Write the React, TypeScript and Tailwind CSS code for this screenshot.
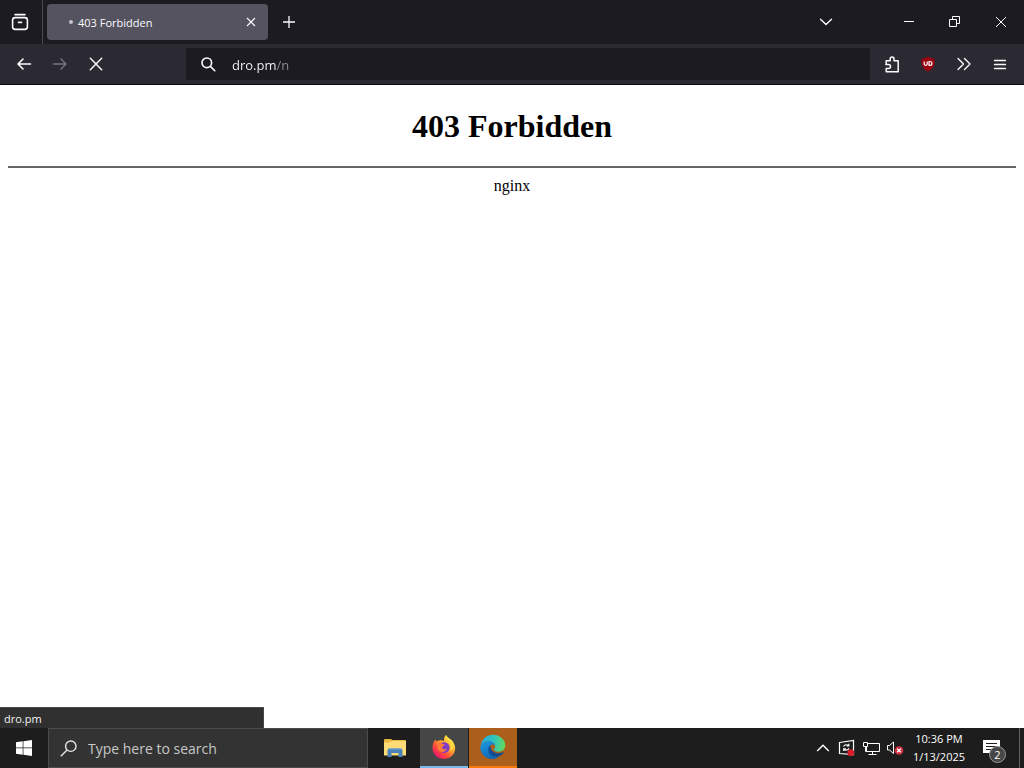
import type { ReactNode } from 'react';

const uiFont = "font-['Open_Sans','Noto_Sans',sans-serif]";

function IconButton({ label, className, children }: { label: string; className: string; children: ReactNode }) {
  return (
    <button type="button" aria-label={label} className={`flex shrink-0 items-center justify-center ${className}`}>
      {children}
    </button>
  );
}

function TabBar() {
  return (
    <header className="flex h-11 items-center bg-[#1c1b22] text-[#fbfbfe]">
      <IconButton label="Firefox View" className="h-11 w-10">
        <svg width="18" height="18" viewBox="0 0 18 18" fill="none" stroke="currentColor" strokeWidth="1.6" strokeLinecap="round">
          <path d="M4 1.6h10" />
          <rect x="1.6" y="4.6" width="14.8" height="11.8" rx="2.6" />
          <path d="M7.5 9.4h3" />
        </svg>
      </IconButton>
      <div className="ml-0.5 h-11 w-px bg-[#4a4954]" />
      <div className="ml-1 flex h-9 w-[221px] items-center rounded bg-[#54535f]">
        <span className="ml-[22px] size-1 rounded-full bg-[#c5c4cc]" />
        <span className="ml-[5px] flex-1 pt-0.5 text-[11px] leading-4">403 Forbidden</span>
        <IconButton label="Close tab" className="mr-[5px] size-6">
          <svg width="10" height="10" viewBox="0 0 10 10" stroke="currentColor" strokeWidth="1.1">
            <path d="M1 1l8 8M9 1l-8 8" />
          </svg>
        </IconButton>
      </div>
      <IconButton label="New tab" className="ml-[5px] size-8">
        <svg width="14" height="14" viewBox="0 0 14 14" stroke="currentColor" strokeWidth="1.3">
          <path d="M7 1v12M1 7h12" />
        </svg>
      </IconButton>
      <div className="flex-1" />
      <IconButton label="List all tabs" className="mr-[42px] size-9">
        <svg width="14" height="8" viewBox="0 0 14 8" fill="none" stroke="currentColor" strokeWidth="1.4" strokeLinecap="round" strokeLinejoin="round">
          <path d="M1.5 1.2L7 6.5l5.5-5.3" />
        </svg>
      </IconButton>
      <IconButton label="Minimize" className="h-11 w-[46px]">
        <svg width="10" height="10" viewBox="0 0 10 10" fill="currentColor">
          <rect y="4" width="10" height="1" />
        </svg>
      </IconButton>
      <IconButton label="Restore" className="h-11 w-[46px]">
        <svg width="12" height="12" viewBox="0 0 12 12" fill="none" stroke="currentColor">
          <path d="M.5 3.5h7v7h-7zM3.5 3V.5h7v7H8" />
        </svg>
      </IconButton>
      <IconButton label="Close" className="h-11 w-[46px]">
        <svg width="12" height="12" viewBox="0 0 12 12" stroke="currentColor">
          <path d="M1 1l10 10M11 1L1 11" />
        </svg>
      </IconButton>
    </header>
  );
}

function NavBar() {
  return (
    <nav className="flex h-[41px] items-center border-b border-[#08080c] bg-[#2b2a33] px-1.5 text-[#fbfbfe]">
      <IconButton label="Back" className="size-9">
        <svg width="16" height="14" viewBox="0 0 16 14" fill="none" stroke="currentColor" strokeWidth="1.6" strokeLinecap="round" strokeLinejoin="round">
          <path d="M14.5 7H2M7 2L2 7l5 5" />
        </svg>
      </IconButton>
      <IconButton label="Forward" className="size-9 text-[#77767e]">
        <svg width="16" height="14" viewBox="0 0 16 14" fill="none" stroke="currentColor" strokeWidth="1.4" strokeLinecap="round" strokeLinejoin="round">
          <path d="M1.5 7H14M9 2l5 5-5 5" />
        </svg>
      </IconButton>
      <IconButton label="Stop" className="size-9">
        <svg width="14" height="14" viewBox="0 0 14 14" stroke="currentColor" strokeWidth="1.4" strokeLinecap="round">
          <path d="M1.3 1.3l11.4 11.4M12.7 1.3L1.3 12.7" />
        </svg>
      </IconButton>
      <div className="ml-[72px] mr-1 flex h-8 min-w-0 flex-1 items-center bg-[#1c1b22]">
        <svg className="ml-[15px] shrink-0" width="15" height="15" viewBox="0 0 15 15" fill="none" stroke="currentColor" strokeWidth="1.6" strokeLinecap="round">
          <circle cx="5.8" cy="5.8" r="4.8" />
          <path d="M9.4 9.4l4.4 4.4" />
        </svg>
        <input
          aria-label="Address"
          defaultValue="dro.pm/n"
          className="ml-4 min-w-0 flex-1 bg-linear-to-r from-[#fbfbfe] from-[44px] to-[#8f8e96] to-[44px] bg-clip-text pt-0.5 text-[13px] leading-5 text-transparent caret-white outline-none"
        />
      </div>
      <IconButton label="Extensions" className="size-9">
        <svg width="16" height="17" viewBox="0 0 16 17" fill="none" stroke="currentColor" strokeWidth="1.5" strokeLinejoin="round">
          <path d="M2.2 8.200V4.800H6.200V3a1.900 1.900 0 0 1 3.800 0v1.800h4.200v11H2.200v-3.300h2.300a2 2 0 0 0 0-4H1.200" />
        </svg>
      </IconButton>
      <IconButton label="uBlock Origin" className="size-9">
        <svg width="16" height="16" viewBox="0 0 16 16" fill="none">
          <path d="M8 .5c1.800 1.200 4 2 6.500 2.200.5 6.200-1 10-6.500 12.800C2.500 12.700 1 8.900 1.500 2.700 4 2.500 6.200 1.700 8 .5z" fill="#9c0311" />
          <path d="M4.200 5.500v2.600q0 1.200 1.500 1.200t1.500-1.200V5.500M9 5.500v3.800h.9q2 0 2-1.900t-2-1.900z" stroke="#fff" strokeWidth="1.2" />
        </svg>
      </IconButton>
      <IconButton label="More tools" className="size-9">
        <svg width="14" height="14" viewBox="0 0 14 14" fill="none" stroke="currentColor" strokeWidth="1.4" strokeLinecap="round" strokeLinejoin="round">
          <path d="M1 1.5L6.5 7 1 12.500M7.5 1.5L13 7l-5.5 5.5" />
        </svg>
      </IconButton>
      <IconButton label="Open application menu" className="size-9">
        <svg width="14" height="11" viewBox="0 0 14 11" stroke="currentColor" strokeWidth="1.3" strokeLinecap="round">
          <path d="M1.500 1.500h11M1.500 5.500h11M1.500 9.500h11" />
        </svg>
      </IconButton>
    </nav>
  );
}

function Taskbar() {
  return (
    <footer className="flex h-10 items-stretch bg-[#1d1d1d] text-white">
      <IconButton label="Start" className="w-12">
        <svg width="16" height="16" viewBox="0 0 16 16" fill="currentColor">
          <path d="M0 2.200l6.700-.9v6.300H0zM7.400 1.200L16 0v7.600H7.400zM0 8.300h6.700v6.400L0 13.800zM7.400 8.300H16V16l-8.600-1.200z" />
        </svg>
      </IconButton>
      <label className="flex w-80 items-center border border-[#4c4c4c] bg-[#333333]">
        <svg className="ml-[11px] shrink-0" width="17" height="17" viewBox="0 0 17 17" fill="none" stroke="#e4e4e4" strokeWidth="1.4">
          <circle cx="10.800" cy="6.200" r="5.200" />
          <path d="M7.100 9.900L.8 16.200" />
        </svg>
        <input
          aria-label="Search"
          placeholder="Type here to search"
          className="ml-[11px] min-w-0 flex-1 bg-transparent pt-0.5 text-sm text-white outline-none placeholder:text-[#c8c8c8]"
        />
      </label>
      <IconButton label="File Explorer" className="ml-[3px] w-12">
        <svg width="22" height="18" viewBox="0 0 22 18">
          <path d="M0 1q0-1 1-1h6l1.500 1H21q1 0 1 1v13H0z" fill="#e9b63d" />
          <path d="M0 3.500h5.500L7.500 2H22v14.500H0z" fill="#fddb76" />
          <path d="M3.500 18v-6.500q0-2 2-2h11q2 0 2 2V18h-4v-4h-7v4z" fill="#4a83ba" />
          <path d="M4.500 10h13" stroke="#6fa6d6" />
        </svg>
      </IconButton>
      <IconButton label="Firefox" className="ml-px w-12 border-b-2 border-[#76b9ed] bg-[#464646]">
        <svg width="24" height="24" viewBox="0 0 24 24">
          <defs>
            <linearGradient id="fox" x1="0.850" y1="0.100" x2="0.200" y2="0.900">
              <stop offset="0" stopColor="#ffed4a" />
              <stop offset=".4" stopColor="#ffa52b" />
              <stop offset=".7" stopColor="#ff5138" />
              <stop offset="1" stopColor="#ed1769" />
            </linearGradient>
          </defs>
          <path d="M14 0c1 2.200 3 3.500 4.400 4.800C22 7.500 23.700 11 23.100 14.500 22.200 20.200 17.600 24 12 24 5.700 24 .8 19.300.5 13.200.4 9.800 1.600 6.400 3.500 4.400l.7 2.200C5 5.700 6 5.500 7.200 5.600L9 5l3 1.200C11.700 4 12.500 1.500 14 0z" fill="url(#fox)" />
          <circle cx="12.300" cy="12.600" r="5.300" fill="#7d3cc7" />
          <path d="M5.500 8.500c1.600-1 3.200-.8 4.500.4 1.400.1 2.300.3 2.600.8-.3 1.300-1.900 1.700-2.900 2.400.5 2.400 3.400 3 5.200 1.500-1.200 4.500-7.700 4.700-9.200.2-.5-1.600-.6-3.500-.2-5.300z" fill="#ff7939" />
          <path d="M14 0c-.5 3.500 1.500 5.300 3.400 7.400 2.200 2.600 1.700 7-.2 9.300 5-2 6.300-7.600 2.900-11.100-2-2-5-2.900-6.100-5.600z" fill="#ffdb43" />
        </svg>
      </IconButton>
      <IconButton label="Microsoft Edge" className="ml-px w-12 border-b-2 border-[#f77a0a] bg-[#ac5f1b]">
        <svg width="26" height="26" viewBox="0 0 26 26">
          <defs>
            <linearGradient id="edge-top" x1="0" y1="0.400" x2="1" y2="0.500">
              <stop offset="0" stopColor="#27a7e5" />
              <stop offset=".55" stopColor="#32c6b8" />
              <stop offset="1" stopColor="#64d85c" />
            </linearGradient>
            <linearGradient id="edge-side" x1="0" y1="0" x2="0.600" y2="1">
              <stop offset="0" stopColor="#1b9de2" />
              <stop offset="1" stopColor="#1363b2" />
            </linearGradient>
          </defs>
          <path d="M.5 12C2 4.500 7 .7 13 .7c7 0 12.300 5 12.300 10.600 0 4-3 6.400-6.700 6.400-2.900 0-4.600-.9-4.600-2.200 0-.8 1.200-1.200 1.200-3C15.200 9.500 12 7 8.300 7 4.500 7 1.700 9 .5 12z" fill="url(#edge-top)" />
          <path d="M.5 12C2 8.600 5 7 8.300 7c3.900 0 6.900 2.300 6.900 5.200 0-1.300-1.600-2.100-3-1.700-2.200.6-3.500 3-3 5.700.8 4.300 5.500 7.100 10 6-2.100 2-4.500 3-7.200 2.900C5 24.600-.5 19 .5 12z" fill="url(#edge-side)" />
          <path d="M10.300 11.600c-3.400 2.400-2.400 9.300 2.700 10.600 4 1.300 8.300-.2 10.400-3.300.4-.6 0-1-.6-.7-5.500 2.600-12.300.3-12.500-6.600z" fill="#124d94" />
        </svg>
      </IconButton>
      <div className="flex-1" />
      <IconButton label="Show hidden icons" className="w-6">
        <svg width="14" height="8" viewBox="0 0 14 8" fill="none" stroke="currentColor" strokeWidth="1.4">
          <path d="M1.200 7L7 1.300 12.800 7" />
        </svg>
      </IconButton>
      <IconButton label="Update status" className="w-6">
        <svg width="18" height="18" viewBox="0 0 18 18" fill="none" stroke="currentColor" strokeWidth="1.2">
          <path d="M1.500 3.500L15.500 1.500v14l-14-1z" />
          <path d="M5.500 7.500c1-2 3.500-2.300 5-.9M10.800 4.800v2.200H8.600M11 9.300c-1 2-3.500 2.300-5 .9M5.700 12V9.800h2.200" />
          <circle cx="12.800" cy="13.700" r="3.400" fill="#d51f2b" stroke="none" />
        </svg>
      </IconButton>
      <IconButton label="Network" className="w-6">
        <svg width="17" height="15" viewBox="0 0 17 15" fill="none" stroke="currentColor">
          <path d="M5 2.500h11.500v8H3.500V6M9.500 10.500v3M5.500 13.500h8M.5 1.500h4v4h-4zM2.500 5.500v5h1" />
        </svg>
      </IconButton>
      <IconButton label="Volume muted" className="w-6">
        <svg width="18" height="16" viewBox="0 0 18 16" fill="none" stroke="currentColor">
          <path d="M1.500 5.500h2L7.500 2v11.500l-4-3.500h-2z" />
          <circle cx="13" cy="10.500" r="4.300" fill="#d53245" stroke="none" />
          <path d="M11.200 8.700l3.600 3.600M14.800 8.700l-3.600 3.600" strokeWidth="1.300" />
        </svg>
      </IconButton>
      <button type="button" className="flex w-16 flex-col items-center justify-center text-[11px] leading-[18px]">
        <span>10:36 PM</span>
        <span>1/13/2025</span>
      </button>
      <button type="button" aria-label="Notifications, 2 new" className="relative flex w-12 items-center justify-center pr-2">
        <svg width="17" height="17" viewBox="0 0 17 17">
          <path d="M0 0h17v13h-5v4l-4-4H0z" fill="#fff" />
          <path d="M3 3.500h11M3 6.500h11M3 9.500h7" stroke="#1d1d1d" />
        </svg>
        <span className="absolute top-[18px] left-[18px] flex size-[17px] items-center justify-center rounded-full border border-[#99999c] bg-[#464646] text-[11px] leading-4">
          2
        </span>
      </button>
      <div className="mr-1 w-px bg-[#606060]" />
    </footer>
  );
}

export default function App() {
  return (
    <div className={`flex min-h-screen flex-col bg-white ${uiFont}`}>
      <TabBar />
      <NavBar />
      <main className="flex-1 px-2 pt-[22px] text-center font-['Liberation_Serif',serif] text-black">
        <h1 className="text-[32px] leading-[38px] font-bold">403 Forbidden</h1>
        <hr className="mt-[21px] border-t-2 border-[#666666]" />
        <p className="mt-2 text-base leading-5">nginx</p>
      </main>
      <div className="h-[21px] w-[264px] border-t border-r border-[#484848] bg-[#303030] px-1 text-[11px] leading-[21px] text-[#f4f4f4]">
        dro.pm
      </div>
      <Taskbar />
    </div>
  );
}
